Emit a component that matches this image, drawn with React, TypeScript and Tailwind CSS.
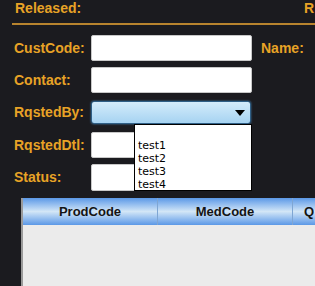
const label = "text-[14px] font-bold text-[#e8a326]"
const input = "h-[26px] w-[161px] bg-white border border-[#c8c8c8] rounded-[2px]"

function Row({ name, top, children }: { name: string; top: string; children: React.ReactNode }) {
  return (
    <div className={`flex items-center ${top}`}>
      <span className={`${label} w-[77px] shrink-0 whitespace-nowrap`}>{name}</span>
      {children}
    </div>
  )
}

export default function App() {
  return (
    <div
      className="relative w-[315px] h-[286px] overflow-hidden bg-[#1b1b1f]"
      style={{ fontFamily: '"Liberation Sans", Arial, sans-serif' }}
    >
      <div className="flex justify-between pl-[15px] pr-[1px] h-[16px] items-center">
        <span className={label}>Released:</span>
        <span className={label}>R</span>
      </div>
      <div className="ml-[12px] mt-[7px] h-[2px] bg-[#b8842e]" />
      <div className="pl-[14px] pt-[10px] flex flex-col">
        <Row name="CustCode:" top="">
          <div className={input} />
          <span className={`${label} ml-[9px]`}>Name:</span>
        </Row>
        <Row name="Contact:" top="mt-[6px]">
          <div className={`${input} h-[25px]`} />
        </Row>
        <Row name="RqstedBy:" top="mt-[8px]">
          <div className="relative h-[23px] w-[160px] rounded-[3px] border border-[#2f5f86] bg-gradient-to-b from-[#d4ecfb] to-[#a6d3f1] shadow-[0_0_2px_#4a8cc0]">
            <span className="absolute right-[5px] top-[8px] w-0 h-0 border-l-[5px] border-r-[5px] border-t-[6px] border-l-transparent border-r-transparent border-t-black" />
          </div>
        </Row>
        <Row name="RqstedDtl:" top="mt-[8px]">
          <div className={input} />
        </Row>
        <Row name="Status:" top="mt-[6px]">
          <div className={`${input} h-[27px]`} />
        </Row>
      </div>
      <div
        className="absolute left-[134px] top-[124px] w-[118px] h-[67px] bg-white border border-black pl-[3px] pt-[14px] leading-[13px] text-black"
        style={{ fontFamily: '"DejaVu Sans", Tahoma, sans-serif', fontSize: '11px' }}
      >
        <div>test1</div>
        <div>test2</div>
        <div>test3</div>
        <div>test4</div>
      </div>
      <div className="ml-[21px] mt-[7px] h-[100px] border-l-2 border-[#9a9a9a] bg-[#ebebeb]">
        <div className="flex h-[27px] bg-gradient-to-b from-[#5b98e6] via-[#d3e6f6] to-[#5b98e6] text-[13px] font-bold text-[#141414]">
          <div className="w-[135px] shrink-0 flex items-center justify-center border-r border-[#7fa6d3]">ProdCode</div>
          <div className="w-[135px] shrink-0 flex items-center justify-center border-r border-[#7fa6d3]">MedCode</div>
          <div className="flex items-center pl-[11px]">Q</div>
        </div>
      </div>
    </div>
  )
}
